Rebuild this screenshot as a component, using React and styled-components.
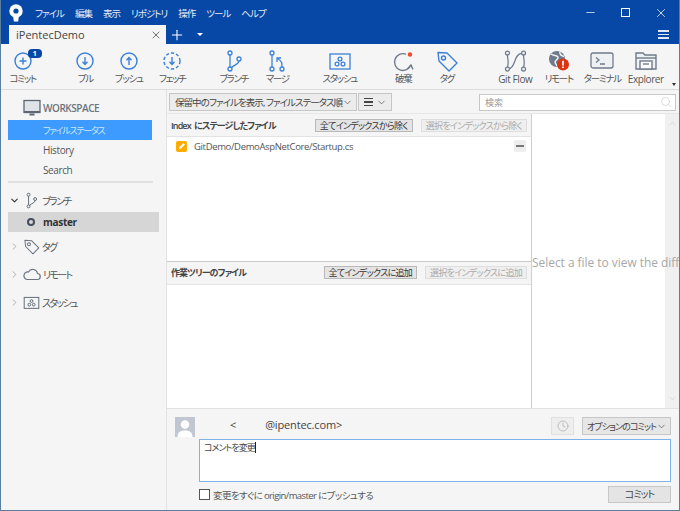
import React from "react";
import styled, { createGlobalStyle } from "styled-components";
import { ChevronDown, ChevronRight, ChevronUp, Clock, Minus, Plus, Search, X } from "lucide-react";

const FONT = `"Open Sans", "Noto Sans CJK JP", sans-serif`;

const Global = createGlobalStyle`
  html, body { margin: 0; padding: 0; background: #f5f5f5; }
  * { box-sizing: border-box; }
`;

const CommitIcon = () => (
  <svg width="26" height="26" viewBox="0 0 26 26" fill="none" stroke="#3b80d8" strokeWidth="1.4">
    <circle cx="13" cy="13" r="8" />
    <path d="M13 9.5v7M9.5 13h7" />
  </svg>
);

const PullIcon = () => (
  <svg width="26" height="26" viewBox="0 0 26 26" fill="none" stroke="#3b80d8" strokeWidth="1.4">
    <circle cx="13" cy="13" r="8" />
    <path d="M13 9v7M10.5 13.8l2.5 2.6 2.5-2.6" />
  </svg>
);

const PushIcon = () => (
  <svg width="26" height="26" viewBox="0 0 26 26" fill="none" stroke="#3b80d8" strokeWidth="1.4">
    <circle cx="13" cy="13" r="8" />
    <path d="M13 17v-7M10.5 12.2l2.5-2.6 2.5 2.6" />
  </svg>
);

const FetchIcon = () => (
  <svg width="26" height="26" viewBox="0 0 26 26" fill="none" stroke="#3b80d8" strokeWidth="1.4">
    <circle cx="13" cy="13" r="8" strokeDasharray="3.2 2" />
    <path d="M13 9v7M10.5 13.8l2.5 2.6 2.5-2.6" />
  </svg>
);

const BranchIcon = ({ color = "#3b80d8", size = 26 }) => (
  <svg width={size} height={size} viewBox="0 0 26 26" fill="none" stroke={color} strokeWidth="1.3">
    <circle cx="9" cy="5" r="2" />
    <circle cx="9" cy="21" r="2" />
    <circle cx="18" cy="11" r="2" />
    <path d="M9 7v12M18 13c0 3-5 4-8 7" />
  </svg>
);

const MergeIcon = () => (
  <svg width="26" height="26" viewBox="0 0 26 26" fill="none" stroke="#3b80d8" strokeWidth="1.3">
    <circle cx="8" cy="5" r="2" />
    <circle cx="8" cy="21" r="2" />
    <circle cx="18" cy="21" r="2" />
    <path d="M8 7v12M18 19c0-4 0-6-4-8M13 14l0-4 4 0" />
  </svg>
);

const StashIcon = ({ color = "#3b80d8", size = 26 }) => (
  <svg width={size} height={size} viewBox="0 0 26 26" fill="none" stroke={color} strokeWidth="1.3">
    <rect x="3" y="6" width="20" height="15" />
    <circle cx="13" cy="11" r="1.9" />
    <circle cx="10" cy="16" r="1.9" />
    <circle cx="16" cy="16" r="1.9" />
  </svg>
);

const DiscardIcon = () => (
  <svg width="26" height="26" viewBox="0 0 26 26" fill="none" stroke="#6f7b8a" strokeWidth="1.4">
    <path d="M16 6.2A8.4 8.4 0 1 0 20.8 17" />
    <path d="M17.5 21l3.5-4 2 4.4" />
    <circle cx="20" cy="6.5" r="2.2" fill="#f04a2c" stroke="none" />
  </svg>
);

const TagIcon = ({ color = "#3b80d8", size = 26 }) => (
  <svg width={size} height={size} viewBox="0 0 26 26" fill="none" stroke={color} strokeWidth="1.4">
    <path d="M4 4.5l9 .5 10 10-8 8L5 13z" strokeLinejoin="round" />
    <circle cx="9.5" cy="10" r="2" />
  </svg>
);

const GitFlowIcon = () => (
  <svg width="25" height="26" viewBox="0 0 28 26" fill="none" stroke="#6f7b8a" strokeWidth="1.4">
    <circle cx="5" cy="4" r="2.2" />
    <circle cx="5" cy="22" r="2.2" />
    <circle cx="23" cy="4" r="2.2" />
    <circle cx="23" cy="22" r="2.2" />
    <path d="M5 6.200C5 12 7 14 5 19.800M23 6.200C23 12 25 14 23 19.800M7 21.500C14 21 12 5 21 4.500" />
  </svg>
);

const RemoteIcon = () => (
  <svg width="28" height="26" viewBox="0 0 28 26" fill="none">
    <circle cx="12" cy="11" r="8" fill="#6f7b8a" />
    <path d="M6 6c3 2 6 1 7 3s-3 3-3 5 2 3 3 5M15 3.500c-1 3 1 4 4 5M14 13c2 0 3 1 4 3" stroke="#f5f5f5" strokeWidth="1.4" />
    <circle cx="18" cy="16.500" r="6" fill="#dd3311" />
    <path d="M18 12.800v4.600M18 18.600v1.400" stroke="#fff" strokeWidth="1.7" />
  </svg>
);

const TerminalIcon = () => (
  <svg width="26" height="26" viewBox="0 0 26 26" fill="none" stroke="#6f7b8a" strokeWidth="1.3">
    <rect x="2" y="5" width="22" height="15" rx="2" fill="#eef0f3" />
    <path d="M7 9.500l3 2.500-3 2.500M11 16h5" />
  </svg>
);

const ExplorerIcon = () => (
  <svg width="26" height="26" viewBox="0 0 26 26" fill="none" stroke="#6f7b8a" strokeWidth="1.4">
    <path d="M3 21V5h7l2 2h11v14z" fill="#eef0f3" />
    <path d="M3 10h20" />
    <rect x="7" y="13" width="12" height="8" fill="#fff" />
    <path d="M10 16h6" />
  </svg>
);

const CloudIcon = () => (
  <svg width="20" height="20" viewBox="0 0 20 20" fill="none" stroke="#6b7480" strokeWidth="1.2">
    <path d="M5 15.500h10a3 3 0 0 0 .5-6A4.800 4.800 0 0 0 6.500 8 3.800 3.800 0 0 0 5 15.500z" />
  </svg>
);

const MonitorIcon = () => (
  <svg width="18" height="18" viewBox="0 0 18 18">
    <rect x="1" y="1.500" width="16" height="12" fill="#dfe2e6" stroke="#5d6773" strokeWidth="1.300" />
    <path d="M1 12h16v2H1zM6.500 14.500h5v2h-5z" fill="#5d6773" />
  </svg>
);

const Logo = () => (
  <svg width="18" height="18" viewBox="0 0 18 18">
    <circle cx="9" cy="7" r="6.700" fill="#fff" />
    <path d="M6 11h6l-.8 6.500H6.800z" fill="#fff" />
    <circle cx="9" cy="7" r="2.600" fill="#0747a6" />
  </svg>
);

const Avatar = () => (
  <svg width="20" height="20" viewBox="0 0 20 20">
    <rect width="20" height="20" fill="#c1c7d0" />
    <circle cx="10" cy="7.500" r="4.300" fill="#fff" />
    <path d="M2.500 20c0-5 3-6.500 7.500-6.500s7.500 1.500 7.500 6.500z" fill="#fff" />
  </svg>
);

const TOOLS = [
  { label: "コミット", icon: <CommitIcon />, badge: "1" },
  { label: "プル", icon: <PullIcon />, gap: 19 },
  { label: "プッシュ", icon: <PushIcon /> },
  { label: "フェッチ", icon: <FetchIcon /> },
  { label: "ブランチ", icon: <BranchIcon />, gap: 18 },
  { label: "マージ", icon: <MergeIcon /> },
  { label: "スタッシュ", icon: <StashIcon />, gap: 19 },
  { label: "破棄", icon: <DiscardIcon />, gap: 20 },
  { label: "タグ", icon: <TagIcon /> },
  { label: "Git Flow", icon: <GitFlowIcon />, gap: 25, latin: true },
  { label: "リモート", icon: <RemoteIcon /> },
  { label: "ターミナル", icon: <TerminalIcon /> },
  { label: "Explorer", icon: <ExplorerIcon />, latin: true },
];

const MENU = ["ファイル", "編集", "表示", "リポジトリ", "操作", "ツール", "ヘルプ"];

export default function App() {
  return (
    <>
      <Global />
      <Window>
        <TitleBar>
          <MenuRow>
            <LogoBox><Logo /></LogoBox>
            {MENU.map((m) => <MenuItem key={m}>{m}</MenuItem>)}
            <WindowButtons>
              <Minus size={13} strokeWidth={1.3} />
              <MaxBox />
              <X size={14} strokeWidth={1.3} />
            </WindowButtons>
          </MenuRow>
          <TabRow>
            <Tab>
              iPentecDemo
              <X size={12} strokeWidth={1.5} color="#444" />
            </Tab>
            <Plus size={16} strokeWidth={1.6} color="#fff" />
            <TabCaret />
            <Burger><i /><i /><i /></Burger>
          </TabRow>
        </TitleBar>

        <Toolbar>
          {TOOLS.map((t) => (
            <ToolButton key={t.label} $gap={t.gap}>
              <ToolIcon>
                {t.icon}
                {t.badge && <Badge>{t.badge}</Badge>}
              </ToolIcon>
              <ToolLabel $latin={t.latin}>{t.label}</ToolLabel>
            </ToolButton>
          ))}
          <MoreCaret />
        </Toolbar>

        <Body>
          <Sidebar>
            <SectionHead $indent={22}>
              <MonitorIcon />
              <Workspace>WORKSPACE</Workspace>
            </SectionHead>
            <NavItem $active>ファイルステータス</NavItem>
            <NavItem>History</NavItem>
            <NavItem>Search</NavItem>
            <Divider />
            <TreeHead $top={7}>
              <ChevronDown size={11} strokeWidth={2.4} color="#333" />
              <BranchIcon color="#5d6773" size={19} />
              ブランチ
            </TreeHead>
            <BranchRow>
              <BranchDot />
              master
            </BranchRow>
            <TreeHead $top={4}>
              <ChevronRight size={11} strokeWidth={2} color="#aaa" />
              <TagIcon color="#6b7480" size={19} />
              タグ
            </TreeHead>
            <TreeHead $top={8}>
              <ChevronRight size={11} strokeWidth={2} color="#aaa" />
              <CloudIcon />
              リモート
            </TreeHead>
            <TreeHead $top={8}>
              <ChevronRight size={11} strokeWidth={2} color="#aaa" />
              <StashIcon color="#5d6773" size={19} />
              スタッシュ
            </TreeHead>
          </Sidebar>

          <Main>
            <FilterBar>
              <Select $width={188}>
                保留中のファイルを表示, ファイルステータス順
                <ChevronDown size={11} strokeWidth={1.6} color="#555" />
              </Select>
              <Select $width={34}>
                <Burger $dark><i /><i /><i /></Burger>
                <ChevronDown size={11} strokeWidth={1.6} color="#555" />
              </Select>
              <SearchBox>
                検索
                <Search size={12} strokeWidth={1.4} color="#ccc" />
              </SearchBox>
            </FilterBar>

            <Split>
              <Files>
                <FilePane $height={148}>
                  <PaneHead>
                    <PaneTitle>Index にステージしたファイル</PaneTitle>
                    <PaneAction>全てインデックスから除く</PaneAction>
                    <PaneAction $disabled>選択をインデックスから除く</PaneAction>
                  </PaneHead>
                  <FileRow>
                    <ModifiedBadge>
                      <svg width="8" height="8" viewBox="0 0 8 8">
                        <path d="M1 7l.5-2L5.500 1 7 2.500 3 6.500z" fill="#fff" />
                      </svg>
                    </ModifiedBadge>
                    GitDemo/DemoAspNetCore/Startup.cs
                    <Unstage><i /></Unstage>
                  </FileRow>
                </FilePane>
                <FilePane>
                  <PaneHead $low>
                    <PaneTitle>作業ツリーのファイル</PaneTitle>
                    <PaneAction>全てインデックスに追加</PaneAction>
                    <PaneAction $disabled>選択をインデックスに追加</PaneAction>
                  </PaneHead>
                </FilePane>
              </Files>
              <Diff>
                <DiffHint>Select a file to view the diff</DiffHint>
                <DiffScroll>
                  <ChevronUp size={11} color="#d5d5d5" />
                  <ChevronDown size={11} color="#d5d5d5" />
                </DiffScroll>
              </Diff>
            </Split>

            <CommitArea>
              <Author>
                <Avatar />
                <Email>
                  <span>&lt;</span>
                  <span>@ipentec.com&gt;</span>
                </Email>
                <ClockButton><Clock size={12} strokeWidth={1.4} color="#aaa" /></ClockButton>
                <OptionsButton>
                  オプションのコミット
                  <ChevronDown size={11} strokeWidth={1.6} color="#555" />
                </OptionsButton>
              </Author>
              <Message>コメントを変更<Caret /></Message>
              <Footer>
                <PushCheck>
                  <Check />
                  変更をすぐに origin/master にプッシュする
                </PushCheck>
                <CommitButton>コミット</CommitButton>
              </Footer>
            </CommitArea>
          </Main>
        </Body>
      </Window>
    </>
  );
}

const Window = styled.div`
  display: flex;
  flex-direction: column;
  width: 680px;
  height: 511px;
  overflow: hidden;
  background: #f5f5f5;
  border: 1px solid #5b7f9e;
  border-top: 0;
  font-family: ${FONT};
  font-feature-settings: "palt";
  font-size: 10px;
  color: #444;
`;

const TitleBar = styled.div`
  height: 44px;
  flex: none;
  margin: 0 -1px;
  background: #0747a6;
  color: #fff;
`;

const MenuRow = styled.div`
  display: flex;
  align-items: center;
  height: 25px;
  padding-left: 7px;
`;

const LogoBox = styled.div`
  display: flex;
  width: 28px;
`;

const MenuItem = styled.span`
  margin-right: 11px;
  font-size: 9.500px;
  letter-spacing: -1px;
  color: #e6edf7;
`;

const WindowButtons = styled.div`
  display: flex;
  align-items: center;
  gap: 24px;
  margin-left: auto;
  padding-right: 12px;
`;

const MaxBox = styled.div`
  width: 9px;
  height: 9px;
  border: 1px solid #fff;
`;

const TabRow = styled.div`
  display: flex;
  align-items: center;
  height: 19px;
  padding-left: 9px;
`;

const Tab = styled.div`
  display: flex;
  align-items: center;
  justify-content: space-between;
  width: 157px;
  height: 19px;
  margin-right: 3px;
  padding: 0 4px 0 7px;
  background: #f5f5f5;
  color: #444;
  font-size: 11px;
`;

const TabCaret = styled.div`
  width: 0;
  height: 0;
  margin-left: 12px;
  border: 3px solid transparent;
  border-top: 3px solid #fff;
  border-bottom: 0;
`;

const Burger = styled.div`
  display: flex;
  flex-direction: column;
  gap: 2px;
  width: ${(p) => (p.$dark ? 9 : 11)}px;
  margin-left: ${(p) => (p.$dark ? 0 : "auto")};
  margin-right: ${(p) => (p.$dark ? 0 : 11)}px;

  i {
    display: block;
    height: 1.4px;
    background: ${(p) => (p.$dark ? "#444" : "#dfe8f5")};
  }
`;

const Toolbar = styled.div`
  position: relative;
  display: flex;
  height: 46px;
  flex: none;
  border-bottom: 1px solid #dcdcdc;
`;

const ToolButton = styled.div`
  display: flex;
  flex-direction: column;
  align-items: center;
  width: 43.5px;
  margin-left: ${(p) => p.$gap || 0}px;
  padding-top: 4px;
`;

const ToolIcon = styled.div`
  position: relative;
  display: flex;
  height: 26px;
  align-items: center;
  justify-content: center;
`;

const Badge = styled.div`
  position: absolute;
  top: 1px;
  left: 18px;
  width: 14px;
  height: 9px;
  border-radius: 4px;
  background: #0747a6;
  color: #fff;
  font-size: 7px;
  font-weight: 700;
  line-height: 9px;
  text-align: center;
`;

const ToolLabel = styled.div`
  margin-top: -2px;
  font-size: ${(p) => (p.$latin ? 10 : 9.5)}px;
  letter-spacing: ${(p) => (p.$latin ? -0.4 : -1.3)}px;
  line-height: 14px;
  color: #555;
  white-space: nowrap;
`;

const MoreCaret = styled.div`
  position: absolute;
  right: 3px;
  bottom: 3px;
  width: 0;
  height: 0;
  border: 2.500px solid transparent;
  border-top: 3px solid #333;
  border-bottom: 0;
`;

const Body = styled.div`
  display: flex;
  flex: 1;
  min-height: 0;
`;

const Sidebar = styled.div`
  width: 166px;
  flex: none;
  padding: 7px 0 0 7px;
  border-right: 1px solid #e2e2e2;
`;

const SectionHead = styled.div`
  display: flex;
  align-items: center;
  gap: 2px;
  height: 21px;
  margin-bottom: 2px;
  padding-left: ${(p) => p.$indent - 7}px;
`;

const Workspace = styled.span`
  font-size: 10px;
  font-weight: 600;
  letter-spacing: -0.45px;
  color: #6b7480;
`;

const NavItem = styled.div`
  display: flex;
  align-items: center;
  width: 144px;
  height: 20px;
  padding-left: 35px;
  background: ${(p) => (p.$active ? "#3d9bff" : "transparent")};
  color: ${(p) => (p.$active ? "#cfe6ff" : "#555")};
  font-size: ${(p) => (p.$active ? 9 : 10)}px;
  letter-spacing: ${(p) => (p.$active ? -1.2 : -0.4)}px;
`;

const Divider = styled.div`
  width: 145px;
  height: 2px;
  margin-top: 1px;
  background: #e0e0e0;
`;

const TreeHead = styled.div`
  display: flex;
  align-items: center;
  height: 20px;
  margin-top: ${(p) => p.$top}px;
  padding-left: 1px;
  font-size: 10px;
  letter-spacing: -1.7px;
  color: #555;

  svg:nth-child(2) {
    margin: 0 1px 0 2px;
  }
`;

const BranchRow = styled.div`
  display: flex;
  align-items: center;
  gap: 8px;
  width: 151px;
  height: 20px;
  margin-top: 2px;
  padding-left: 19px;
  background: #d6d6d6;
  color: #333;
  font-size: 10px;
  font-weight: 700;
  letter-spacing: -0.3px;
`;

const BranchDot = styled.div`
  width: 8px;
  height: 8px;
  border: 2px solid #444e5c;
  border-radius: 50%;
`;

const Main = styled.div`
  display: flex;
  flex: 1;
  min-width: 0;
  flex-direction: column;
`;

const FilterBar = styled.div`
  display: flex;
  align-items: center;
  gap: 1px;
  height: 23px;
  flex: none;
  padding: 1px 3px 0 2px;
`;

const Select = styled.div`
  display: flex;
  align-items: center;
  justify-content: space-between;
  width: ${(p) => p.$width}px;
  height: 18px;
  padding: 0 4px 0 5px;
  border: 1px solid #c6c6c6;
  background: #ececec;
  color: #444;
  font-size: 9.500px;
  letter-spacing: -0.95px;
  white-space: nowrap;

  svg {
    flex: none;
  }
`;

const SearchBox = styled.div`
  display: flex;
  align-items: center;
  justify-content: space-between;
  width: 197px;
  height: 17px;
  margin-left: auto;
  padding: 0 3px 0 5px;
  border: 1px solid #c8c8c8;
  background: #fff;
  color: #999;
  font-size: 9px;
`;

const Split = styled.div`
  display: flex;
  flex: 1;
  min-height: 0;
  border-top: 1px solid #e6e6e6;
  border-bottom: 1px solid #e0e0e0;
`;

const Files = styled.div`
  display: flex;
  width: 364px;
  flex: none;
  flex-direction: column;
  background: #fff;
`;

const FilePane = styled.div`
  height: ${(p) => (p.$height ? `${p.$height}px` : "auto")};
  flex: ${(p) => (p.$height ? "none" : 1)};
  border-bottom: ${(p) => (p.$height ? "1px solid #c8c8c8" : 0)};
`;

const PaneHead = styled.div`
  display: flex;
  align-items: center;
  gap: 8px;
  height: 23px;
  padding: 0 4px ${(p) => (p.$low ? 1 : 0)}px 4px;
  background: #f5f5f5;
  border-bottom: 1px solid #e3e3e3;
`;

const PaneTitle = styled.div`
  margin-right: auto;
  font-size: 9px;
  font-weight: 600;
  letter-spacing: -0.9px;
  word-spacing: 2px;
  color: #444;
  white-space: nowrap;
`;

const PaneAction = styled.div`
  height: 13px;
  padding: 0 4px;
  border: 1px solid ${(p) => (p.$disabled ? "#dedede" : "#b9b9b9")};
  background: ${(p) => (p.$disabled ? "#efefef" : "#e4e4e4")};
  color: ${(p) => (p.$disabled ? "#aaa" : "#333")};
  font-size: 9px;
  letter-spacing: -0.7px;
  line-height: 11px;
  white-space: nowrap;
`;

const FileRow = styled.div`
  display: flex;
  align-items: center;
  gap: 7px;
  height: 18px;
  padding: 0 5px 0 9px;
  color: #555;
  font-size: 9.500px;
  letter-spacing: -0.35px;
`;

const ModifiedBadge = styled.div`
  display: flex;
  align-items: center;
  justify-content: center;
  width: 11px;
  height: 11px;
  border-radius: 2px;
  background: #ffab00;
`;

const Unstage = styled.div`
  display: flex;
  align-items: center;
  justify-content: center;
  width: 12px;
  height: 12px;
  margin-left: auto;
  border-radius: 2px;
  background: #eee;

  i {
    width: 8px;
    height: 2px;
    background: #777;
  }
`;

const Diff = styled.div`
  position: relative;
  display: flex;
  flex: 1;
  align-items: center;
  min-width: 0;
  background: #fff;
  border-left: 1px solid #cfcfcf;
`;

const DiffHint = styled.div`
  position: relative;
  z-index: 1;
  margin-top: 1px;
  color: #a8a8a8;
  font-size: 11.900px;
  white-space: nowrap;
`;

const DiffScroll = styled.div`
  position: absolute;
  top: 0;
  right: 0;
  bottom: 0;
  display: flex;
  flex-direction: column;
  align-items: center;
  justify-content: space-between;
  width: 14px;
  padding: 4px 0;
  background: #f0f0f0;
`;

const CommitArea = styled.div`
  height: 101px;
  flex: none;
  padding: 8px 8px 0 8px;
`;

const Author = styled.div`
  display: flex;
  align-items: flex-start;
  gap: 8px;
  height: 20px;
  margin-bottom: 2px;
`;

const Email = styled.div`
  display: flex;
  gap: 29px;
  margin-left: 27px;
  margin-right: auto;
  color: #444;
  font-size: 11px;
  letter-spacing: -0.15px;
  line-height: 16px;
`;

const ClockButton = styled.div`
  display: flex;
  align-items: center;
  justify-content: center;
  width: 23px;
  height: 18px;
  border: 1px solid #e0e0e0;
  background: #eeeeee;
`;

const OptionsButton = styled.div`
  display: flex;
  align-items: center;
  justify-content: space-between;
  width: 89px;
  height: 18px;
  padding: 0 4px 0 4px;
  border: 1px solid #c6c6c6;
  background: #e6e6e6;
  color: #444;
  font-size: 9px;
  letter-spacing: -0.9px;
  white-space: nowrap;

  svg {
    flex: none;
  }
`;

const Message = styled.div`
  width: 472px;
  height: 43px;
  margin-left: 24px;
  padding: 1px 4px;
  border: 1px solid #7fb3e8;
  background: #fff;
  color: #444;
  font-size: 9px;
  letter-spacing: -1px;
`;

const Caret = styled.span`
  display: inline-block;
  width: 1px;
  height: 11px;
  vertical-align: -2px;
  background: #222;
`;

const Footer = styled.div`
  display: flex;
  align-items: center;
  justify-content: space-between;
  margin: 4px 0 0 24px;
`;

const PushCheck = styled.div`
  display: flex;
  align-items: center;
  gap: 3px;
  color: #555;
  font-size: 9.500px;
  letter-spacing: -0.6px;
`;

const Check = styled.div`
  width: 11px;
  height: 11px;
  border: 1px solid #555;
  background: #fff;
`;

const CommitButton = styled.div`
  width: 63px;
  height: 17px;
  border: 1px solid #c6c6c6;
  background: #e4e4e4;
  color: #444;
  font-size: 10px;
  letter-spacing: -1px;
  line-height: 15px;
  text-align: center;
`;
